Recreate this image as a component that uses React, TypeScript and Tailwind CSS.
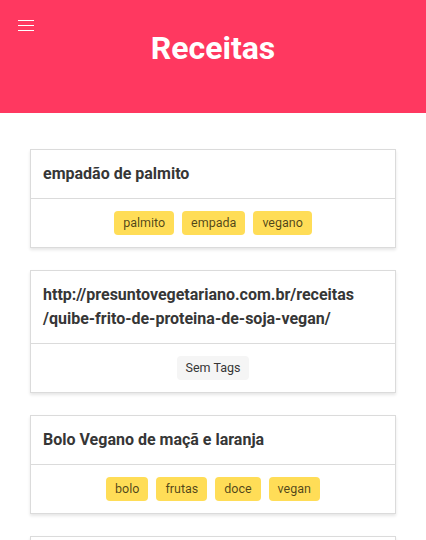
const recipes = [
  { id: 1, title: 'empadão de palmito', tags: ['palmito', 'empada', 'vegano'] },
  {
    id: 2,
    title: 'http://presuntovegetariano.com.br/receitas/quibe-frito-de-proteina-de-soja-vegan/',
    tags: [] as string[],
  },
  { id: 3, title: 'Bolo Vegano de maçã e laranja', tags: ['bolo', 'frutas', 'doce', 'vegan'] },
  { id: 4, title: 'Torta de legumes', tags: ['torta'] },
];

function App() {
  return (
    <div className="min-h-screen bg-white font-['Roboto',sans-serif] text-[#363636]">
      {/* topo */}
      <header className="relative h-[113px] bg-[#ff3860] flex justify-center pt-[28px]">
        <button className="absolute left-[18px] top-[20px] flex flex-col gap-[4px] w-4">
          <span className="block h-px w-4 bg-white" />
          <span className="block h-px w-4 bg-white" />
          <span className="block h-px w-4 bg-white" />
        </button>
        <h1 className="text-[32px] leading-[40px] font-bold text-white">Receitas</h1>
      </header>

      {/* lista */}
      <main className="px-[30px] pt-[36px] flex flex-col gap-[22px]">
        {recipes.map((recipe) => (
          <div
            key={recipe.id}
            className="bg-white border border-[#dbdbdb] shadow-[0_2px_3px_rgba(10,10,10,0.1)]"
          >
            <div className="px-3 py-3 text-base leading-6 font-bold break-all">
              {recipe.title.includes('/receitas/') ? (
                <>
                  http://presuntovegetariano.com.br/receitas
                  <br />
                  /quibe-frito-de-proteina-de-soja-vegan/
                </>
              ) : (
                recipe.title
              )}
            </div>
            <div className="border-t border-[#dbdbdb] py-3 flex justify-center gap-2">
              {recipe.tags.length > 0 ? (
                recipe.tags.map((tag) => (
                  <span
                    key={tag}
                    className="h-6 px-[9px] rounded-[4px] bg-[#ffdd57] text-black/70 text-[12.5px] flex items-center"
                  >
                    {tag}
                  </span>
                ))
              ) : (
                <span className="h-6 px-[9px] rounded-[4px] bg-[#f5f5f5] text-[#363636] text-[12.5px] flex items-center">
                  Sem Tags
                </span>
              )}
            </div>
          </div>
        ))}
      </main>
    </div>
  );
}

export default App;
